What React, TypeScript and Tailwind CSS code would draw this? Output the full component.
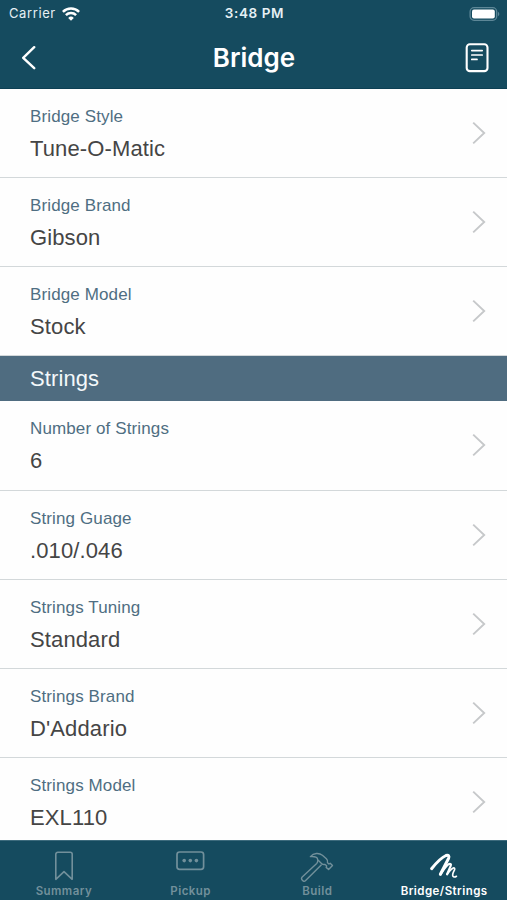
import type { ReactNode } from "react";

type Field = { label: string; value: string };

const bridgeFields: Field[] = [
  { label: "Bridge Style", value: "Tune-O-Matic" },
  { label: "Bridge Brand", value: "Gibson" },
  { label: "Bridge Model", value: "Stock" },
];

const stringFields: Field[] = [
  { label: "Number of Strings", value: "6" },
  { label: "String Guage", value: ".010/.046" },
  { label: "Strings Tuning", value: "Standard" },
  { label: "Strings Brand", value: "D'Addario" },
  { label: "Strings Model", value: "EXL110" },
];

function StatusBar() {
  return (
    <div className="grid h-[27px] grid-cols-3 items-center pl-[9px] pr-[7px] font-[Inter,sans-serif] text-[13px] text-[#e6f0f4]">
      <div className="flex items-center gap-[6px] tracking-[0.6px]">
        Carrier
        <svg width="18" height="14" viewBox="0 0 18 14" fill="none" stroke="#fff" strokeWidth="2.5">
          <path d="M0.9 4.9a11.6 11.6 0 0 1 16.2 0" />
          <path d="M3.9 8.1a7.2 7.2 0 0 1 10.2 0" />
          <path d="M9 13.7 6.2 10.9a4 4 0 0 1 5.6 0z" fill="#fff" stroke="none" />
        </svg>
      </div>
      <div className="whitespace-nowrap text-center text-[13.5px] font-semibold tracking-[0.6px]">3:48 PM</div>
      <svg className="justify-self-end" width="31" height="14" viewBox="0 0 31 14">
        <rect x="1.1" y="0.7" width="26.6" height="12.6" rx="4" fill="none" stroke="#5d8797" strokeWidth="1.3" />
        <rect x="3" y="2.5" width="22.8" height="9" rx="2" fill="#fff" />
        <path d="M29 4.8c1.8.8 1.8 3.6 0 4.4z" fill="#5d8797" />
      </svg>
    </div>
  );
}

function Header() {
  return (
    <header className="h-[89px] shrink-0 border-b border-[#0d4054] bg-[#154b5f]">
      <StatusBar />
      <div className="grid h-[61px] grid-cols-3 items-center pl-[21px] pr-[18px]">
        <button type="button" aria-label="Back">
          <svg width="16" height="24" viewBox="0 0 16 24" fill="none" stroke="#fff" strokeWidth="2.4" strokeLinecap="round" strokeLinejoin="round">
            <path d="M13.2 1.2 2.2 11.8l11 10.4" />
          </svg>
        </button>
        <h1 className="pr-[2px] text-center font-[Inter,sans-serif] text-[26px] font-semibold leading-none text-white">
          Bridge
        </h1>
        <button type="button" aria-label="Notes" className="justify-self-end">
          <svg width="24" height="30" viewBox="0 0 24 30" fill="none" stroke="#fff" strokeLinecap="round">
            <rect x="1.7" y="1.3" width="20.8" height="26.8" rx="3.2" strokeWidth="2.1" />
            <path d="M6.8 7.6h10.4M6.8 12h10.4M6.8 16.4h5.2" strokeWidth="1.7" />
          </svg>
        </button>
      </div>
    </header>
  );
}

function FieldRow({ label, value }: Field) {
  return (
    <div className="flex h-[89.15px] shrink-0 items-center justify-between border-b-[1.5px] border-[#d3d8da] pl-[30px] pr-[21px]">
      <div className="pt-[4px] font-['Liberation_Sans',sans-serif]">
        <div className="text-[17px] leading-[19px] tracking-[0.12px] text-[#4f6e82]">{label}</div>
        <div className="mt-[9px] text-[22px] leading-[28px] tracking-[0.12px] text-[#454545]">{value}</div>
      </div>
      <svg width="14" height="24" viewBox="0 0 14 24" fill="none" stroke="#c6c8ca" strokeWidth="1.9">
        <path d="M1.2 1.6 12.2 12 1.2 22.4" />
      </svg>
    </div>
  );
}

function Tab({ label, active, children }: { label: string; active?: boolean; children: ReactNode }) {
  return (
    <button
      type="button"
      className={
        active
          ? "flex flex-1 flex-col items-center text-white"
          : "flex flex-1 flex-col items-center text-[#72909b]"
      }
    >
      <span className="flex h-[34px] items-start">{children}</span>
      <span className="pl-px font-[Inter,sans-serif] text-[11.5px] font-semibold leading-[14px] tracking-[0.45px]">
        {label}
      </span>
    </button>
  );
}

function TabBar() {
  return (
    <nav className="flex h-[60px] shrink-0 border-t border-[#3d6b7d] bg-[#154b5f] pt-[9px]">
      <Tab label="Summary">
        <svg className="ml-[2px] mt-px" width="20" height="30" viewBox="0 0 20 30" fill="none" stroke="currentColor" strokeWidth="1.6" strokeLinejoin="round">
          <path d="M1.8 3.3a2 2 0 0 1 2-2h12.4a2 2 0 0 1 2 2v25L10 20.6 1.8 28.3z" />
        </svg>
      </Tab>
      <Tab label="Pickup">
        <svg className="ml-px mt-px" width="29" height="20" viewBox="0 0 29 20" fill="none" stroke="currentColor" strokeWidth="1.7">
          <rect x="1" y="1" width="26.6" height="17.4" rx="2.6" />
          <g fill="currentColor" stroke="none">
            <circle cx="8.2" cy="9.6" r="1.8" />
            <circle cx="14.3" cy="9.6" r="1.8" />
            <circle cx="20.4" cy="9.6" r="1.8" />
          </g>
        </svg>
      </Tab>
      <Tab label="Build">
        <svg className="mt-[2px]" width="34" height="32" viewBox="0 0 34 32" fill="none" stroke="currentColor" strokeWidth="1.4" strokeLinejoin="round" strokeLinecap="round">
          <path d="M10.4 4.6C13.8.8 19 .6 22.4 3.2l4 3.5c1.3 1.2 1.5 2.5 1.1 4l1.5 1.3 1.2-.7 2.3 2.2-3.9 4-2.4-2.1.4-1.6-1.5-1.4c-1.4.3-2.5 0-3.6-1l-3.8-3.6c.1-2.2-2.4-3.6-7.3-3.2z" />
          <path d="M17.7 8.6c.1 1.2-.2 2-1 2.8L2.2 25c-1.9 1.8 1.2 5.6 3.2 3.8L21.2 12.9" />
        </svg>
      </Tab>
      <Tab label="Bridge/Strings" active>
        <svg className="mt-[2px]" width="30" height="30" viewBox="0 0 30 30" fill="none" stroke="currentColor" strokeLinecap="round" strokeLinejoin="round">
          <path d="M2.6 16.7C7 11.2 12.8 5.4 17 3.5c2.4-1 3.6.7 2.5 3L11.4 22.3" strokeWidth="3" />
          <path d="M11.4 22.3C14.3 18.2 17 14 19.6 12.2c1.9-1 2.8.2 2.1 1.7l-3.6 8.4" strokeWidth="2.2" />
          <path d="M18.1 22.3c1.8-2.4 3.7-5.1 5.7-6.1 1.6-.7 2.4.4 1.6 1.9-1.1 2-2.1 4.8-1.5 6.1.6 1.1 2.2 1 3.5.1" strokeWidth="1.7" />
        </svg>
      </Tab>
    </nav>
  );
}

export default function App() {
  return (
    <div className="flex h-[900px] w-[507px] flex-col overflow-hidden bg-[#fefefe]">
      <Header />
      <main className="flex min-h-0 flex-1 flex-col overflow-hidden">
        {bridgeFields.map((f) => (
          <FieldRow key={f.label} {...f} />
        ))}
        <h2 className="h-[45px] shrink-0 bg-[#4f6c80] pl-[30px] font-['Liberation_Sans',sans-serif] text-[22px] leading-[46px] tracking-[0.1px] text-[#f3f8fa]">
          Strings
        </h2>
        {stringFields.map((f) => (
          <FieldRow key={f.label} {...f} />
        ))}
      </main>
      <TabBar />
    </div>
  );
}
